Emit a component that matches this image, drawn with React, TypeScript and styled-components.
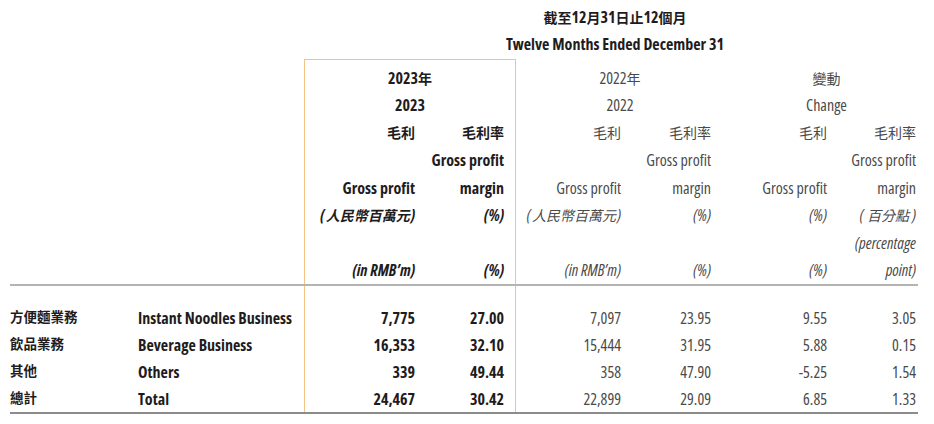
import React from 'react';
import styled, { createGlobalStyle } from 'styled-components';

const Global = createGlobalStyle`
  html, body { margin: 0; padding: 0; background: #ffffff; }
  body {
    font-family: "Open Sans", "Noto Sans CJK TC", sans-serif;
    font-stretch: 75%;
    -webkit-font-smoothing: antialiased;
  }
`;

const Table = styled.div`
  display: grid;
  width: 934px;
  box-sizing: border-box;
  padding: 4px 0 0 10px;
  grid-template-columns: 128px 167px 110px 89px 11px 106px 90px 116px 89px 2px;
  grid-template-rows: 27px 27px 6px repeat(8, 27.5px) 2px 18px repeat(4, 27px) 2px;
`;

const Box = styled.div`
  grid-column: 3 / 6;
  grid-row: 3 / 18;
  margin: 1px -1px 0 -1px;
  border: 1.5px solid #f4c382;
  border-bottom: none;
  pointer-events: none;
`;

const Rule = styled.div<{ $row: number; $dark?: boolean }>`
  grid-column: 1 / -1;
  grid-row: ${(p) => p.$row};
  background: ${(p) => (p.$dark ? '#8c8c8c' : '#b4b4b4')};
  position: relative;
  z-index: 1;
`;

const Title = styled.div<{ $row: number }>`
  grid-column: 3 / -1;
  grid-row: ${(p) => p.$row};
  display: flex;
  align-items: center;
  justify-content: center;
  padding: 0 0 1px 7px;
  font-weight: 700;
  font-size: 16px;
  color: #1f1c1d;
  white-space: nowrap;
`;

const Group = styled.div<{ $row: number; $col: string; $shift: number; $bold?: boolean }>`
  grid-column: ${(p) => p.$col};
  grid-row: ${(p) => p.$row};
  display: flex;
  align-items: center;
  justify-content: center;
  padding-left: ${(p) => p.$shift}px;
  font-size: 16px;
  font-weight: ${(p) => (p.$bold ? 700 : 400)};
  color: ${(p) => (p.$bold ? '#1f1c1d' : '#4a4a4a')};
  white-space: nowrap;
`;

const Cell = styled.div<{
  $row: number;
  $col: number;
  $bold?: boolean;
  $italic?: boolean;
  $left?: boolean;
  $lift?: number;
}>`
  grid-column: ${(p) => p.$col};
  grid-row: ${(p) => p.$row};
  display: flex;
  align-items: center;
  justify-content: ${(p) => (p.$left ? 'flex-start' : 'flex-end')};
  padding-bottom: ${(p) => p.$lift ?? 0}px;
  font-size: 16px;
  font-weight: ${(p) => (p.$bold ? 700 : 400)};
  font-style: ${(p) => (p.$italic ? 'italic' : 'normal')};
  color: ${(p) => (p.$bold ? '#1f1c1d' : '#4a4a4a')};
  white-space: nowrap;
`;

const Zh = styled.span<{ $size?: number; $gap?: number }>`
  font-family: "Noto Sans CJK TC", sans-serif;
  font-size: ${(p) => p.$size ?? 14}px;
  padding: 0 ${(p) => p.$gap ?? 0}px;
`;

const Paren = ({ children, gap }: { children: string; gap: number }) => (
  <>
    (<Zh $gap={gap}>{children}</Zh>)
  </>
);

// grid column indices for the six value columns
const C = [3, 4, 6, 7, 8, 9];

type H = { r: number; c: number; t: React.ReactNode; b?: boolean; i?: boolean; l?: number };

const header: H[] = [
  { r: 6, c: C[0], t: <Zh>毛利</Zh>, b: true, l: 2 },
  { r: 6, c: C[1], t: <Zh>毛利率</Zh>, b: true, l: 2 },
  { r: 6, c: C[2], t: <Zh>毛利</Zh>, l: 2 },
  { r: 6, c: C[3], t: <Zh>毛利率</Zh>, l: 2 },
  { r: 6, c: C[4], t: <Zh>毛利</Zh>, l: 2 },
  { r: 6, c: C[5], t: <Zh>毛利率</Zh>, l: 2 },
  { r: 7, c: C[1], t: 'Gross profit', b: true },
  { r: 7, c: C[3], t: 'Gross profit' },
  { r: 7, c: C[5], t: 'Gross profit' },
  { r: 8, c: C[0], t: 'Gross profit', b: true },
  { r: 8, c: C[1], t: 'margin', b: true },
  { r: 8, c: C[2], t: 'Gross profit' },
  { r: 8, c: C[3], t: 'margin' },
  { r: 8, c: C[4], t: 'Gross profit' },
  { r: 8, c: C[5], t: 'margin' },
  { r: 9, c: C[0], t: <Paren gap={1}>人民幣百萬元</Paren>, b: true, i: true, l: 1 },
  { r: 9, c: C[1], t: '(%)', b: true, i: true },
  { r: 9, c: C[2], t: <Paren gap={1}>人民幣百萬元</Paren>, i: true, l: 1 },
  { r: 9, c: C[3], t: '(%)', i: true },
  { r: 9, c: C[4], t: '(%)', i: true },
  { r: 9, c: C[5], t: <Paren gap={3}>百分點</Paren>, i: true, l: 1 },
  { r: 10, c: C[5], t: '(percentage', i: true },
  { r: 11, c: C[0], t: '(in RMB’m)', b: true, i: true },
  { r: 11, c: C[1], t: '(%)', b: true, i: true },
  { r: 11, c: C[2], t: '(in RMB’m)', i: true },
  { r: 11, c: C[3], t: '(%)', i: true },
  { r: 11, c: C[4], t: '(%)', i: true },
  { r: 11, c: C[5], t: 'point)', i: true },
];

const rows = [
  { zh: '方便麵業務', en: 'Instant Noodles Business', v: ['7,775', '27.00', '7,097', '23.95', '9.55', '3.05'] },
  { zh: '飲品業務', en: 'Beverage Business', v: ['16,353', '32.10', '15,444', '31.95', '5.88', '0.15'] },
  { zh: '其他', en: 'Others', v: ['339', '49.44', '358', '47.90', '-5.25', '1.54'] },
  { zh: '總計', en: 'Total', v: ['24,467', '30.42', '22,899', '29.09', '6.85', '1.33'] },
];

export default function App() {
  return (
    <>
      <Global />
      <Table>
        <Title $row={1}>
          <Zh>截至</Zh>12<Zh>月</Zh>31<Zh>日止</Zh>12<Zh>個月</Zh>
        </Title>
        <Title $row={2}>Twelve Months Ended December 31</Title>

        <Box />

        <Group $row={4} $col="3 / 6" $shift={0} $bold>
          2023<Zh>年</Zh>
        </Group>
        <Group $row={5} $col="3 / 6" $shift={0} $bold>
          2023
        </Group>
        <Group $row={4} $col="6 / 8" $shift={14}>
          2022<Zh>年</Zh>
        </Group>
        <Group $row={5} $col="6 / 8" $shift={14}>
          2022
        </Group>
        <Group $row={4} $col="8 / 10" $shift={26}>
          <Zh>變動</Zh>
        </Group>
        <Group $row={5} $col="8 / 10" $shift={26}>
          Change
        </Group>

        {header.map((h, k) => (
          <Cell key={k} $row={h.r} $col={h.c} $bold={h.b} $italic={h.i} $lift={h.l}>
            {h.t}
          </Cell>
        ))}

        <Rule $row={12} />

        {rows.map((row, k) => (
          <React.Fragment key={row.en}>
            <Cell $row={14 + k} $col={1} $left $bold $lift={3}>
              <Zh $size={13.5}>{row.zh}</Zh>
            </Cell>
            <Cell $row={14 + k} $col={2} $left $bold>
              {row.en}
            </Cell>
            {row.v.map((val, j) => (
              <Cell key={j} $row={14 + k} $col={C[j]} $bold={j < 2}>
                {val}
              </Cell>
            ))}
          </React.Fragment>
        ))}

        <Rule $row={18} $dark />
      </Table>
    </>
  );
}
